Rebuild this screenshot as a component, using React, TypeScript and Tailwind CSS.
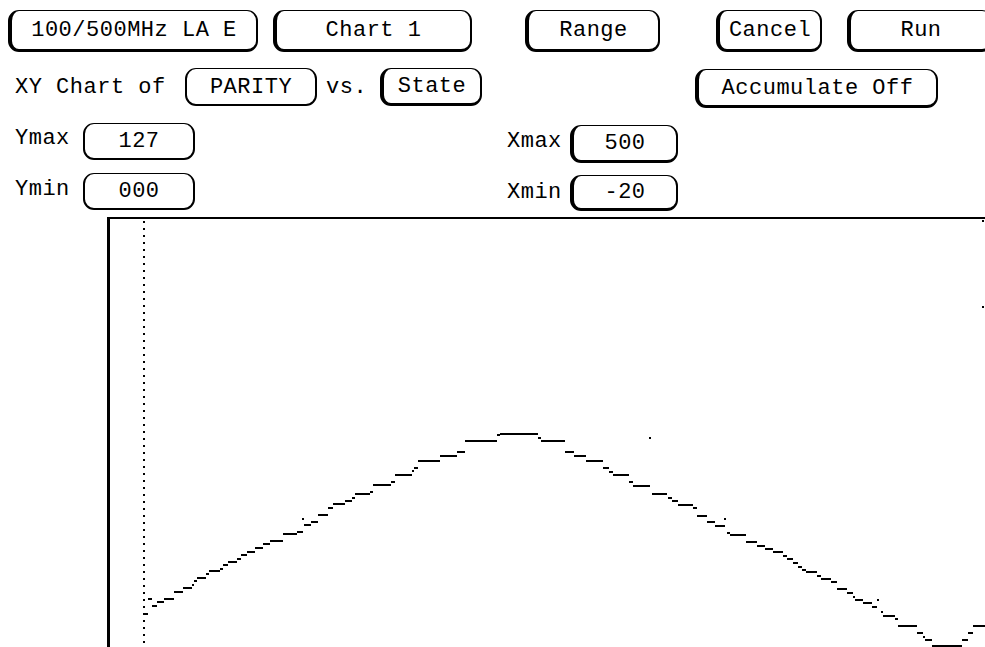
import React from "react";

const SEGS: [number, number, number][] = [
  [143,148,614],[148,152,599],[152,157,606],[157,164,602],[164,174,599],[174,183,592],[183,192,588],[192,194,585],[194,197,581],[197,206,578],[206,209,574],[209,220,571],[220,223,569],[223,228,565],[228,237,562],[237,241,559],[241,247,555],[247,255,552],[255,263,548],[263,270,544],[270,283,541],[283,297,534],[297,303,532],[304,311,525],[311,318,522],[318,328,515],[328,333,508],[333,345,504],[345,352,501],[352,355,498],[355,370,494],[370,373,492],[373,391,485],[391,395,482],[395,412,475],[412,414,471],[414,418,468],[418,440,461],[440,457,456],[457,465,452],[465,497,441],[497,500,435],[500,538,434],[538,541,438],[541,565,441],[565,574,452],[574,586,456],[586,603,461],[603,609,468],[609,613,472],[613,629,475],[629,633,482],[633,650,486],[652,667,494],[668,672,498],[672,678,501],[678,693,505],[693,697,508],[697,707,516],[707,715,522],[715,725,526],[727,730,533],[730,746,535],[746,757,542],[757,765,546],[765,773,549],[773,783,552],[783,787,556],[787,793,559],[793,798,563],[798,802,567],[802,806,570],[806,817,572],[817,821,576],[821,831,579],[831,837,582],[837,847,589],[847,853,593],[853,855,597],[855,863,600],[863,872,603],[872,877,607],[881,883,612],[883,895,616],[895,898,619],[898,917,626],[917,923,633],[923,925,637],[925,932,640],[932,962,646],[962,968,640],[968,973,633],[973,985,626]
];
const DOTS: [number, number][] = [[303,519],[650,438],[725,519],[878,600],[983,307],[983,221]];

function Btn({ className, heavy = true, children }: { className: string; heavy?: boolean; children: React.ReactNode }) {
  return (
    <div
      className={
        "flex shrink-0 items-center justify-center rounded-[11px] border-solid border-black bg-white pt-[2px] " +
        (heavy ? "border-t border-r-2 border-b-[3px] border-l-[4px] " : "border-t-[1.5px] border-r-2 border-b-2 border-l-2 ") +
        className
      }
    >
      {children}
    </div>
  );
}

export default function App() {
  return (
    <div
      className="relative flex h-[647px] w-[985px] flex-col overflow-hidden bg-white text-[22px] leading-none tracking-[0.5px] text-black"
      style={{ fontFamily: '"Liberation Mono", "DejaVu Sans Mono", monospace' }}
    >
      {/* Row 1 */}
      <div className="flex h-[52px] shrink-0 items-start pt-[10px]">
        <Btn className="ml-[8px] h-[42px] w-[250px]">100/500MHz LA E</Btn>
        <Btn className="ml-[15px] h-[42px] w-[199px]">Chart 1</Btn>
        <Btn className="ml-[53px] h-[42px] w-[135px]">Range</Btn>
        <Btn className="ml-[56px] h-[42px] w-[106px]">Cancel</Btn>
        <Btn className="ml-[25px] h-[42px] w-[146px]">Run</Btn>
      </div>

      {/* Row 2 */}
      <div className="mt-[16px] flex h-[40px] shrink-0 items-start">
        <span className="ml-[15px] flex h-[38px] w-[170px] items-center pt-[2px]">XY Chart of</span>
        <Btn heavy={false} className="h-[38px] w-[132px]">PARITY</Btn>
        <span className="ml-[9px] flex h-[38px] w-[54px] items-center pt-[2px]">vs.</span>
        <Btn className="h-[38px] w-[102px]">State</Btn>
        <Btn className="ml-[213px] mt-[1px] h-[39px] w-[243px]">Accumulate Off</Btn>
      </div>

      {/* Row 3 */}
      <div className="mt-[15px] flex h-[40px] shrink-0 items-start">
        <span className="ml-[15px] flex h-[32px] w-[68px] items-center">Ymax</span>
        <Btn heavy={false} className="h-[37px] w-[112px]">127</Btn>
        <span className="ml-[312px] mt-[2px] flex h-[34px] w-[63px] items-center">Xmax</span>
        <Btn className="mt-[2px] h-[38px] w-[108px]">500</Btn>
      </div>

      {/* Row 4 */}
      <div className="mt-[10px] flex h-[38px] shrink-0 items-start">
        <span className="ml-[15px] flex h-[34px] w-[68px] items-center">Ymin</span>
        <Btn heavy={false} className="h-[37px] w-[112px]">000</Btn>
        <span className="ml-[312px] mt-[2px] flex h-[36px] w-[63px] items-center">Xmin</span>
        <Btn className="mt-[2px] h-[36px] w-[108px]">-20</Btn>
      </div>

      {/* Chart */}
      <div className="relative ml-[107px] mt-[6px] w-[890px] flex-1 border-l-[3px] border-t-2 border-solid border-black">
        <svg
          className="absolute left-0 top-0"
          width={887}
          height={430}
          viewBox="110 219 887 430"
          shapeRendering="crispEdges"
        >
          <line x1={144} y1={221} x2={144} y2={647} stroke="black" strokeWidth={2} strokeDasharray="2 5" />
          {SEGS.map(([x1, x2, y], i) => (
            <rect key={i} x={x1} y={y - 1} width={x2 - x1} height={2} fill="black" />
          ))}
          {DOTS.map(([x, y], i) => (
            <rect key={"d" + i} x={x - 1} y={y - 1} width={2} height={2} fill="black" />
          ))}
        </svg>
      </div>
    </div>
  );
}
